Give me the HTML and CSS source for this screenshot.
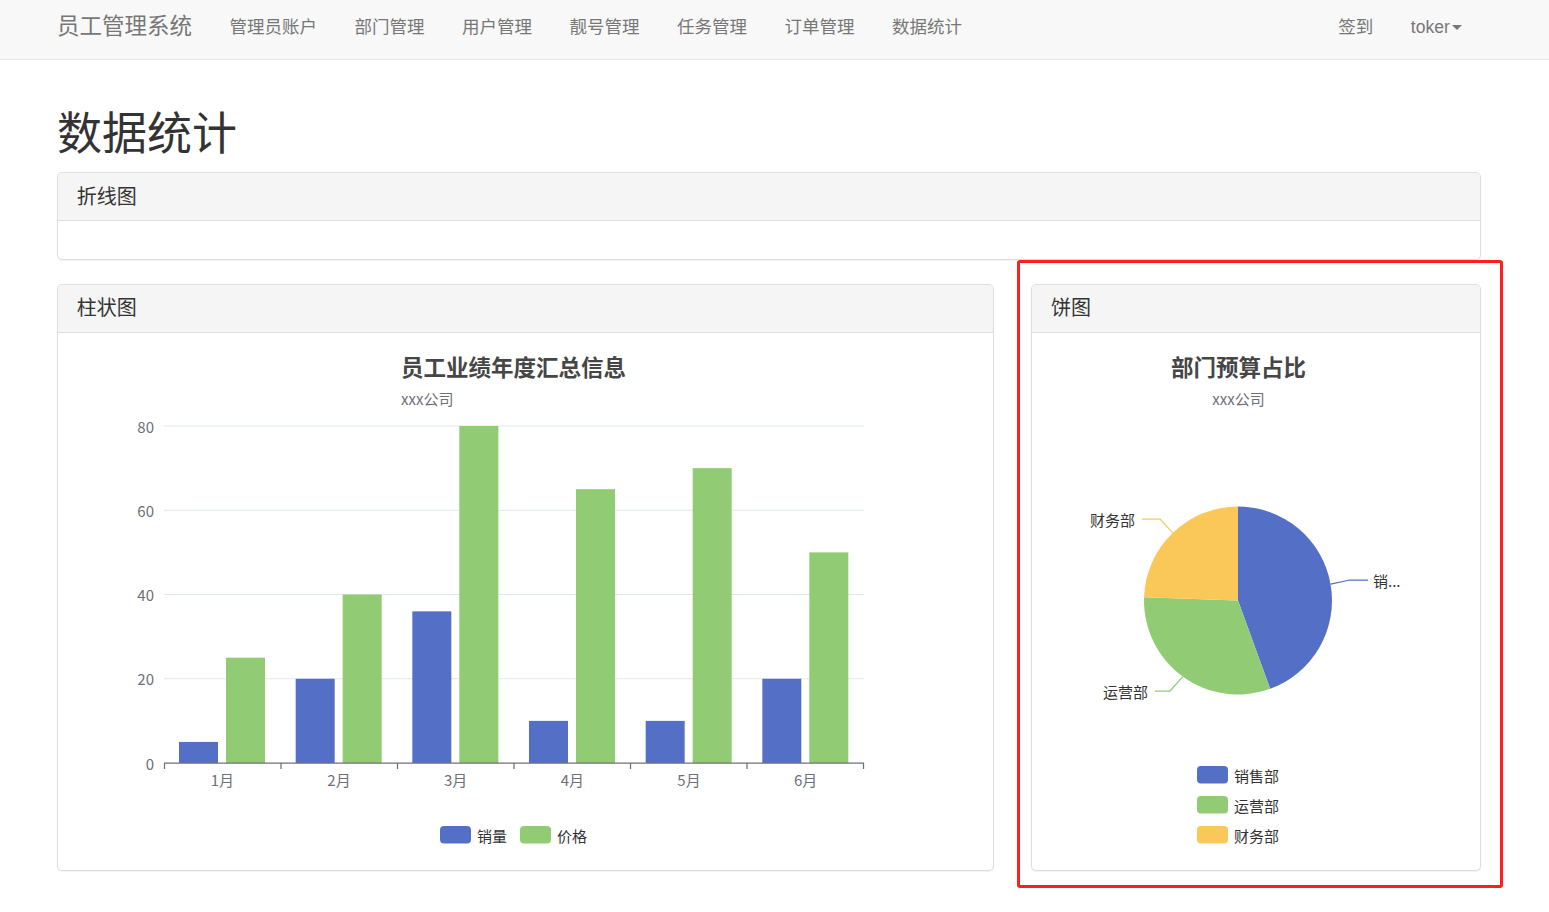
FILE: index.html
```html
<!DOCTYPE html>
<html lang="zh-CN">
<head>
<meta charset="utf-8">
<title>数据统计</title>
<link rel="stylesheet" href="styles.css">
</head>
<body>
<nav class="navbar">
  <div class="nav-inner">
    <a class="brand">员工管理系统</a>
    <ul class="nav-links">
      <li>管理员账户</li>
      <li>部门管理</li>
      <li>用户管理</li>
      <li>靓号管理</li>
      <li>任务管理</li>
      <li>订单管理</li>
      <li>数据统计</li>
    </ul>
    <ul class="nav-links nav-right">
      <li>签到</li>
      <li>toker<span class="caret"></span></li>
    </ul>
  </div>
</nav>

<main class="container">
  <h1 class="page-title">数据统计</h1>

  <section class="panel panel-first">
    <div class="panel-heading">折线图</div>
    <div class="panel-body"></div>
  </section>

  <div class="row">
    <section class="panel">
      <div class="panel-heading">柱状图</div>
      <div class="panel-body chart-body">
        <svg class="chart" width="897" height="500" viewBox="0 0 897 500">
          <text class="c-title" x="324" y="16">员工业绩年度汇总信息</text>
          <text class="c-sub" x="324" y="48">xxx公司</text>
          <g class="grid">
            <line x1="87" x2="787" y1="76" y2="76"/>
            <line x1="87" x2="787" y1="160.25" y2="160.25"/>
            <line x1="87" x2="787" y1="244.5" y2="244.5"/>
            <line x1="87" x2="787" y1="328.75" y2="328.75"/>
          </g>
          <g class="ylab">
            <text x="77" y="76">80</text>
            <text x="77" y="160.25">60</text>
            <text x="77" y="244.5">40</text>
            <text x="77" y="328.75">20</text>
            <text x="77" y="413">0</text>
          </g>
          <g class="blue">
            <rect x="102" y="391.94" width="39" height="21.06"/>
            <rect x="218.67" y="328.75" width="39" height="84.25"/>
            <rect x="335.33" y="261.35" width="39" height="151.65"/>
            <rect x="452" y="370.88" width="39" height="42.12"/>
            <rect x="568.67" y="370.88" width="39" height="42.12"/>
            <rect x="685.33" y="328.75" width="39" height="84.25"/>
          </g>
          <g class="green">
            <rect x="149" y="307.69" width="39" height="105.31"/>
            <rect x="265.67" y="244.5" width="39" height="168.5"/>
            <rect x="382.33" y="76" width="39" height="337"/>
            <rect x="499" y="139.19" width="39" height="273.81"/>
            <rect x="615.67" y="118.13" width="39" height="294.87"/>
            <rect x="732.33" y="202.38" width="39" height="210.62"/>
          </g>
          <g class="axis">
            <line x1="87" x2="787" y1="413" y2="413"/>
            <line x1="87.5" x2="87.5" y1="413" y2="419"/>
            <line x1="204" x2="204" y1="413" y2="419"/>
            <line x1="320.5" x2="320.5" y1="413" y2="419"/>
            <line x1="437" x2="437" y1="413" y2="419"/>
            <line x1="553.5" x2="553.5" y1="413" y2="419"/>
            <line x1="670" x2="670" y1="413" y2="419"/>
            <line x1="786.5" x2="786.5" y1="413" y2="419"/>
          </g>
          <g class="xlab">
            <text x="145.33" y="429">1月</text>
            <text x="262" y="429">2月</text>
            <text x="378.67" y="429">3月</text>
            <text x="495.33" y="429">4月</text>
            <text x="612" y="429">5月</text>
            <text x="728.67" y="429">6月</text>
          </g>
          <g class="legend">
            <rect class="sw-blue" x="363" y="476" width="31" height="17.5" rx="4"/>
            <text x="400" y="485">销量</text>
            <rect class="sw-green" x="443" y="476" width="31" height="17.5" rx="4"/>
            <text x="480" y="485">价格</text>
          </g>
        </svg>
      </div>
    </section>

    <section class="panel">
      <div class="panel-heading">饼图</div>
      <div class="panel-body chart-body">
        <svg class="chart" width="410" height="500" viewBox="0 0 410 500">
          <text class="c-title mid" x="187.5" y="16">部门预算占比</text>
          <text class="c-sub mid" x="187.5" y="48">xxx公司</text>
          <path class="sw-blue" d="M187 250.5 L187 156.5 A94 94 0 0 1 219.15 338.83 Z"/>
          <path class="sw-green" d="M187 250.5 L219.15 338.83 A94 94 0 0 1 93.06 247.22 Z"/>
          <path class="sw-yellow" d="M187 250.5 L93.06 247.22 A94 94 0 0 1 187 156.5 Z"/>
          <polyline class="ll ll-blue" points="279.6,234.2 299,230 317,230"/>
          <polyline class="ll ll-green" points="131.8,326.6 119,341 104,341"/>
          <polyline class="ll ll-yellow" points="121.7,182.9 109,169 91,169"/>
          <g class="plab">
            <text x="322" y="230">销...</text>
            <text class="end" x="97" y="341">运营部</text>
            <text class="end" x="84" y="169">财务部</text>
          </g>
          <g class="legend">
            <rect class="sw-blue" x="146" y="416" width="31" height="17.5" rx="4"/>
            <text x="183" y="425">销售部</text>
            <rect class="sw-green" x="146" y="446" width="31" height="17.5" rx="4"/>
            <text x="183" y="455">运营部</text>
            <rect class="sw-yellow" x="146" y="476" width="31" height="17.5" rx="4"/>
            <text x="183" y="485">财务部</text>
          </g>
        </svg>
      </div>
    </section>
  </div>
</main>

<div class="highlight-box"></div>
</body>
</html>
```

FILE: styles.css
```css
* { box-sizing: border-box; }

body {
  margin: 0;
  padding-bottom: 15px;
  font-family: "Liberation Sans", "Noto Sans CJK SC", sans-serif;
  font-size: 17.5px;
  color: #333;
  background: #fff;
  position: relative;
}

.navbar {
  height: 60px;
  background: #f8f8f8;
  border-bottom: 1px solid #e7e7e7;
  margin-bottom: 25px;
}

.nav-inner {
  width: 1424px;
  margin-left: 57px;
  display: flex;
  align-items: flex-start;
}

.brand {
  font-size: 22.5px;
  line-height: 25px;
  padding-top: 13.5px;
  padding-right: 18.75px;
  color: #777;
}

.nav-links {
  list-style: none;
  margin: 0;
  padding: 0;
  display: flex;
}

.nav-links li {
  padding: 14.5px 18.75px 0;
  line-height: 25px;
  color: #777;
}

.nav-right {
  margin-left: auto;
}

.caret {
  display: inline-block;
  width: 0;
  height: 0;
  margin-left: 2.5px;
  vertical-align: middle;
  border-top: 5px solid #777;
  border-left: 5px solid transparent;
  border-right: 5px solid transparent;
}

.container {
  width: 1424px;
  margin-left: 57px;
}

.page-title {
  font-size: 45px;
  line-height: 49.5px;
  font-weight: 400;
  margin: 50px 0 12.5px;
  color: #333;
}

.panel {
  border: 1px solid #ddd;
  border-radius: 5px;
  margin-bottom: 25px;
  background: #fff;
  box-shadow: 0 1px 1px rgba(0, 0, 0, 0.05);
}

.panel-first {
  margin-bottom: 24px;
}

.panel-heading {
  background: #f5f5f5;
  border-bottom: 1px solid #ddd;
  border-radius: 4px 4px 0 0;
  padding: 12.5px 18.75px;
  font-size: 20px;
  line-height: 22px;
  color: #333;
}

.panel-body {
  padding: 18.75px;
}

.chart-body {
  padding-top: 17px;
  padding-bottom: 20.5px;
}

.row {
  display: grid;
  grid-template-columns: 936.75px 449.75px;
  column-gap: 37.5px;
}

.chart {
  display: block;
  font-family: "Noto Sans CJK SC", "Liberation Sans", sans-serif;
}

.chart text {
  dominant-baseline: central;
}

.c-title {
  font-size: 22.5px;
  font-weight: 700;
  fill: #464646;
}

.c-sub {
  font-size: 15px;
  fill: #6e7079;
}

.mid { text-anchor: middle; }

.grid line {
  stroke: #e0e6f1;
  stroke-width: 1;
}

.ylab text {
  font-size: 15px;
  fill: #6e7079;
  text-anchor: end;
}

.xlab text {
  font-size: 15px;
  fill: #6e7079;
  text-anchor: middle;
}

.axis line {
  stroke: #6e7079;
  stroke-width: 1.25;
}

.blue rect, .sw-blue { fill: #5470c6; }
.green rect, .sw-green { fill: #91cc75; }
.sw-yellow { fill: #fac858; }

.legend text {
  font-size: 15px;
  fill: #333;
}

.ll {
  fill: none;
  stroke-width: 1.25;
}
.ll-blue { stroke: #5470c6; }
.ll-green { stroke: #91cc75; }
.ll-yellow { stroke: #fac858; }

.plab text {
  font-size: 15px;
  fill: #333;
}
.plab .end { text-anchor: end; }

.highlight-box {
  position: absolute;
  left: 1017px;
  top: 260px;
  width: 486px;
  height: 628px;
  border: 3px solid #ff1f1f;
  border-radius: 3px;
  pointer-events: none;
}
```
